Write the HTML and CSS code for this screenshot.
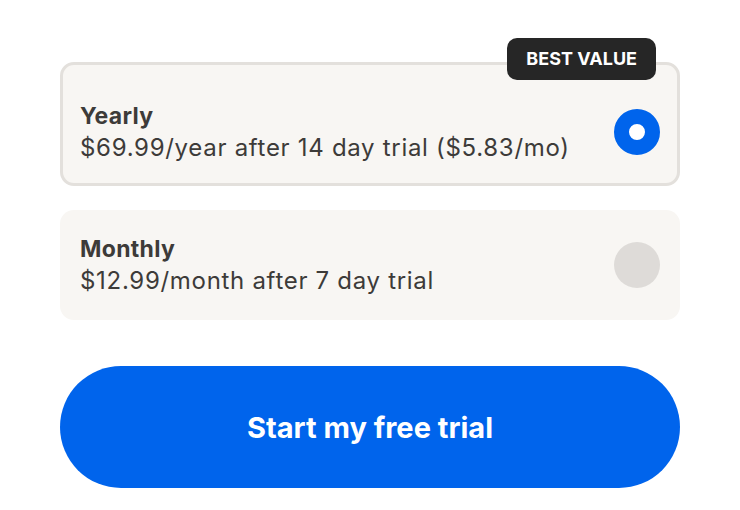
FILE: index.html
```html
<!DOCTYPE html>
<html lang="en">
<head>
    <meta charset="UTF-8">
    <meta name="viewport" content="width=device-width, initial-scale=1.0">
    <title>Choose a plan</title>
    <link rel="stylesheet" href="styles.css">
</head>
<body>

    <div class="plans">
        <div class="plan plan-selected">
            <span class="badge">BEST VALUE</span>
            <div class="plan-text">
                <div class="plan-name">Yearly</div>
                <div class="plan-price">$69.99/year after 14 day trial ($5.83/mo)</div>
            </div>
            <span class="radio radio-on"></span>
        </div>

        <div class="plan">
            <div class="plan-text">
                <div class="plan-name">Monthly</div>
                <div class="plan-price">$12.99/month after 7 day trial</div>
            </div>
            <span class="radio"></span>
        </div>

        <button class="start">Start my free trial</button>
    </div>

</body>
</html>
```

FILE: styles.css
```css
body {
    font-family: 'Inter', 'Liberation Sans', sans-serif;
    margin: 0;
    padding: 0;
    background: #fff;
    color: #3d3b39;
}

.plans {
    width: 620px;
    margin-left: 60px;
    padding-top: 62px;
    display: flex;
    flex-direction: column;
}

.plan {
    position: relative;
    display: flex;
    align-items: center;
    justify-content: space-between;
    background-color: #f8f6f3;
    border-radius: 14px;
    padding: 23px 20px 23px 20px;
}

.plan-selected {
    border: 3px solid #e3e0dc;
    padding: 35px 17px 19px 17px;
    margin-bottom: 24px;
}

.badge {
    position: absolute;
    top: -27px;
    right: 21px;
    background-color: #262626;
    color: #fff;
    font-size: 18px;
    font-weight: 700;
    padding: 0 19px;
    height: 42px;
    line-height: 42px;
    border-radius: 10px;
}

.plan-name {
    font-size: 23px;
    font-weight: 700;
    line-height: 32px;
    letter-spacing: 0.3px;
}

.plan-price {
    font-size: 24px;
    line-height: 32px;
    letter-spacing: 0.7px;
}

.radio {
    width: 46px;
    height: 46px;
    border-radius: 50%;
    background-color: #dedbd8;
    box-sizing: border-box;
}

.radio-on {
    background-color: #fff;
    border: 15px solid #0064ec;
}

.start {
    margin-top: 46px;
    height: 122px;
    border: none;
    border-radius: 61px;
    background-color: #0064ec;
    color: #fff;
    font-family: inherit;
    font-size: 29px;
    font-weight: 700;
    cursor: pointer;
}
```
